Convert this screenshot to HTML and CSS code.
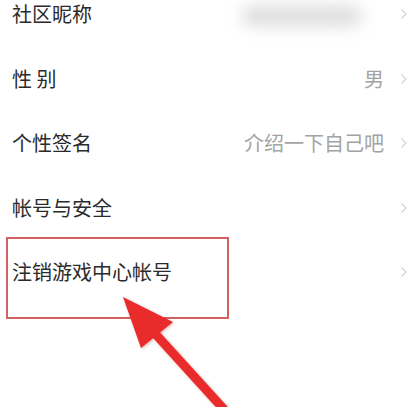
FILE: index.html
```html
<!DOCTYPE html>
<html lang="zh-CN">
<head>
<meta charset="utf-8">
<link rel="stylesheet" href="styles.css">
</head>
<body>
<div class="page">
  <ul class="list">
    <li class="row">
      <span class="label">社区昵称</span>
      <span class="value"><span class="blurred"></span></span>
      <svg class="chev" viewBox="0 0 8 12"><path d="M1.5 1.5 L6 6 L1.5 10.5"/></svg>
    </li>
    <li class="row">
      <span class="label">性 别</span>
      <span class="value">男</span>
      <svg class="chev" viewBox="0 0 8 12"><path d="M1.5 1.5 L6 6 L1.5 10.5"/></svg>
    </li>
    <li class="row">
      <span class="label">个性签名</span>
      <span class="value">介绍一下自己吧</span>
      <svg class="chev" viewBox="0 0 8 12"><path d="M1.5 1.5 L6 6 L1.5 10.5"/></svg>
    </li>
    <li class="row">
      <span class="label">帐号与安全</span>
      <span class="value"></span>
      <svg class="chev" viewBox="0 0 8 12"><path d="M1.5 1.5 L6 6 L1.5 10.5"/></svg>
    </li>
    <li class="row">
      <span class="label">注销游戏中心帐号</span>
      <span class="value"></span>
      <svg class="chev" viewBox="0 0 8 12"><path d="M1.5 1.5 L6 6 L1.5 10.5"/></svg>
    </li>
  </ul>
  <div class="highlight"></div>
  <svg class="arrow" viewBox="0 0 413 407">
    <line x1="150" y1="328" x2="230" y2="416" class="shaft"/>
    <polygon points="123,297 141,348 173,322" class="head"/>
  </svg>
</div>
</body>
</html>
```
FILE: styles.css
```css
html, body {
  margin: 0;
  padding: 0;
  background: #ffffff;
}
body {
  width: 413px;
  height: 407px;
  overflow: hidden;
  font-family: "Noto Sans CJK SC", "Noto Sans", sans-serif;
}
.page {
  position: relative;
  width: 413px;
  height: 407px;
  overflow: hidden;
}
.list {
  list-style: none;
  margin: -18px 0 0 0;
  padding: 0;
}
.row {
  height: 64.5px;
  display: flex;
  align-items: center;
  padding: 0 5px 0 12px;
}
.label {
  font-size: 20px;
  color: #2b2b2b;
  flex: 1;
  white-space: pre;
  line-height: 1;
}
.value {
  font-size: 20px;
  color: #a3a3a3;
  line-height: 1;
  margin-right: 16px;
  display: flex;
  align-items: center;
}
.blurred {
  display: block;
  width: 120px;
  height: 20px;
  margin-top: 4px;
  background: #dcdcdc;
  border-radius: 10px;
  filter: blur(8px);
  margin-right: 22px;
}
.chev {
  width: 8px;
  height: 12px;
  fill: none;
  stroke: #d2d2d2;
  stroke-width: 1.1;
}
.highlight {
  position: absolute;
  left: 6px;
  top: 237px;
  width: 219px;
  height: 78px;
  border: 2.5px solid #d26262;
}
.arrow {
  position: absolute;
  left: 0;
  top: 0;
  width: 413px;
  height: 407px;
  filter: blur(0.5px) drop-shadow(1px 1px 1.5px rgba(180, 40, 40, 0.35));
}
.shaft {
  stroke: #ea2b2b;
  stroke-width: 9;
}
.head {
  fill: #ea2b2b;
}
```
